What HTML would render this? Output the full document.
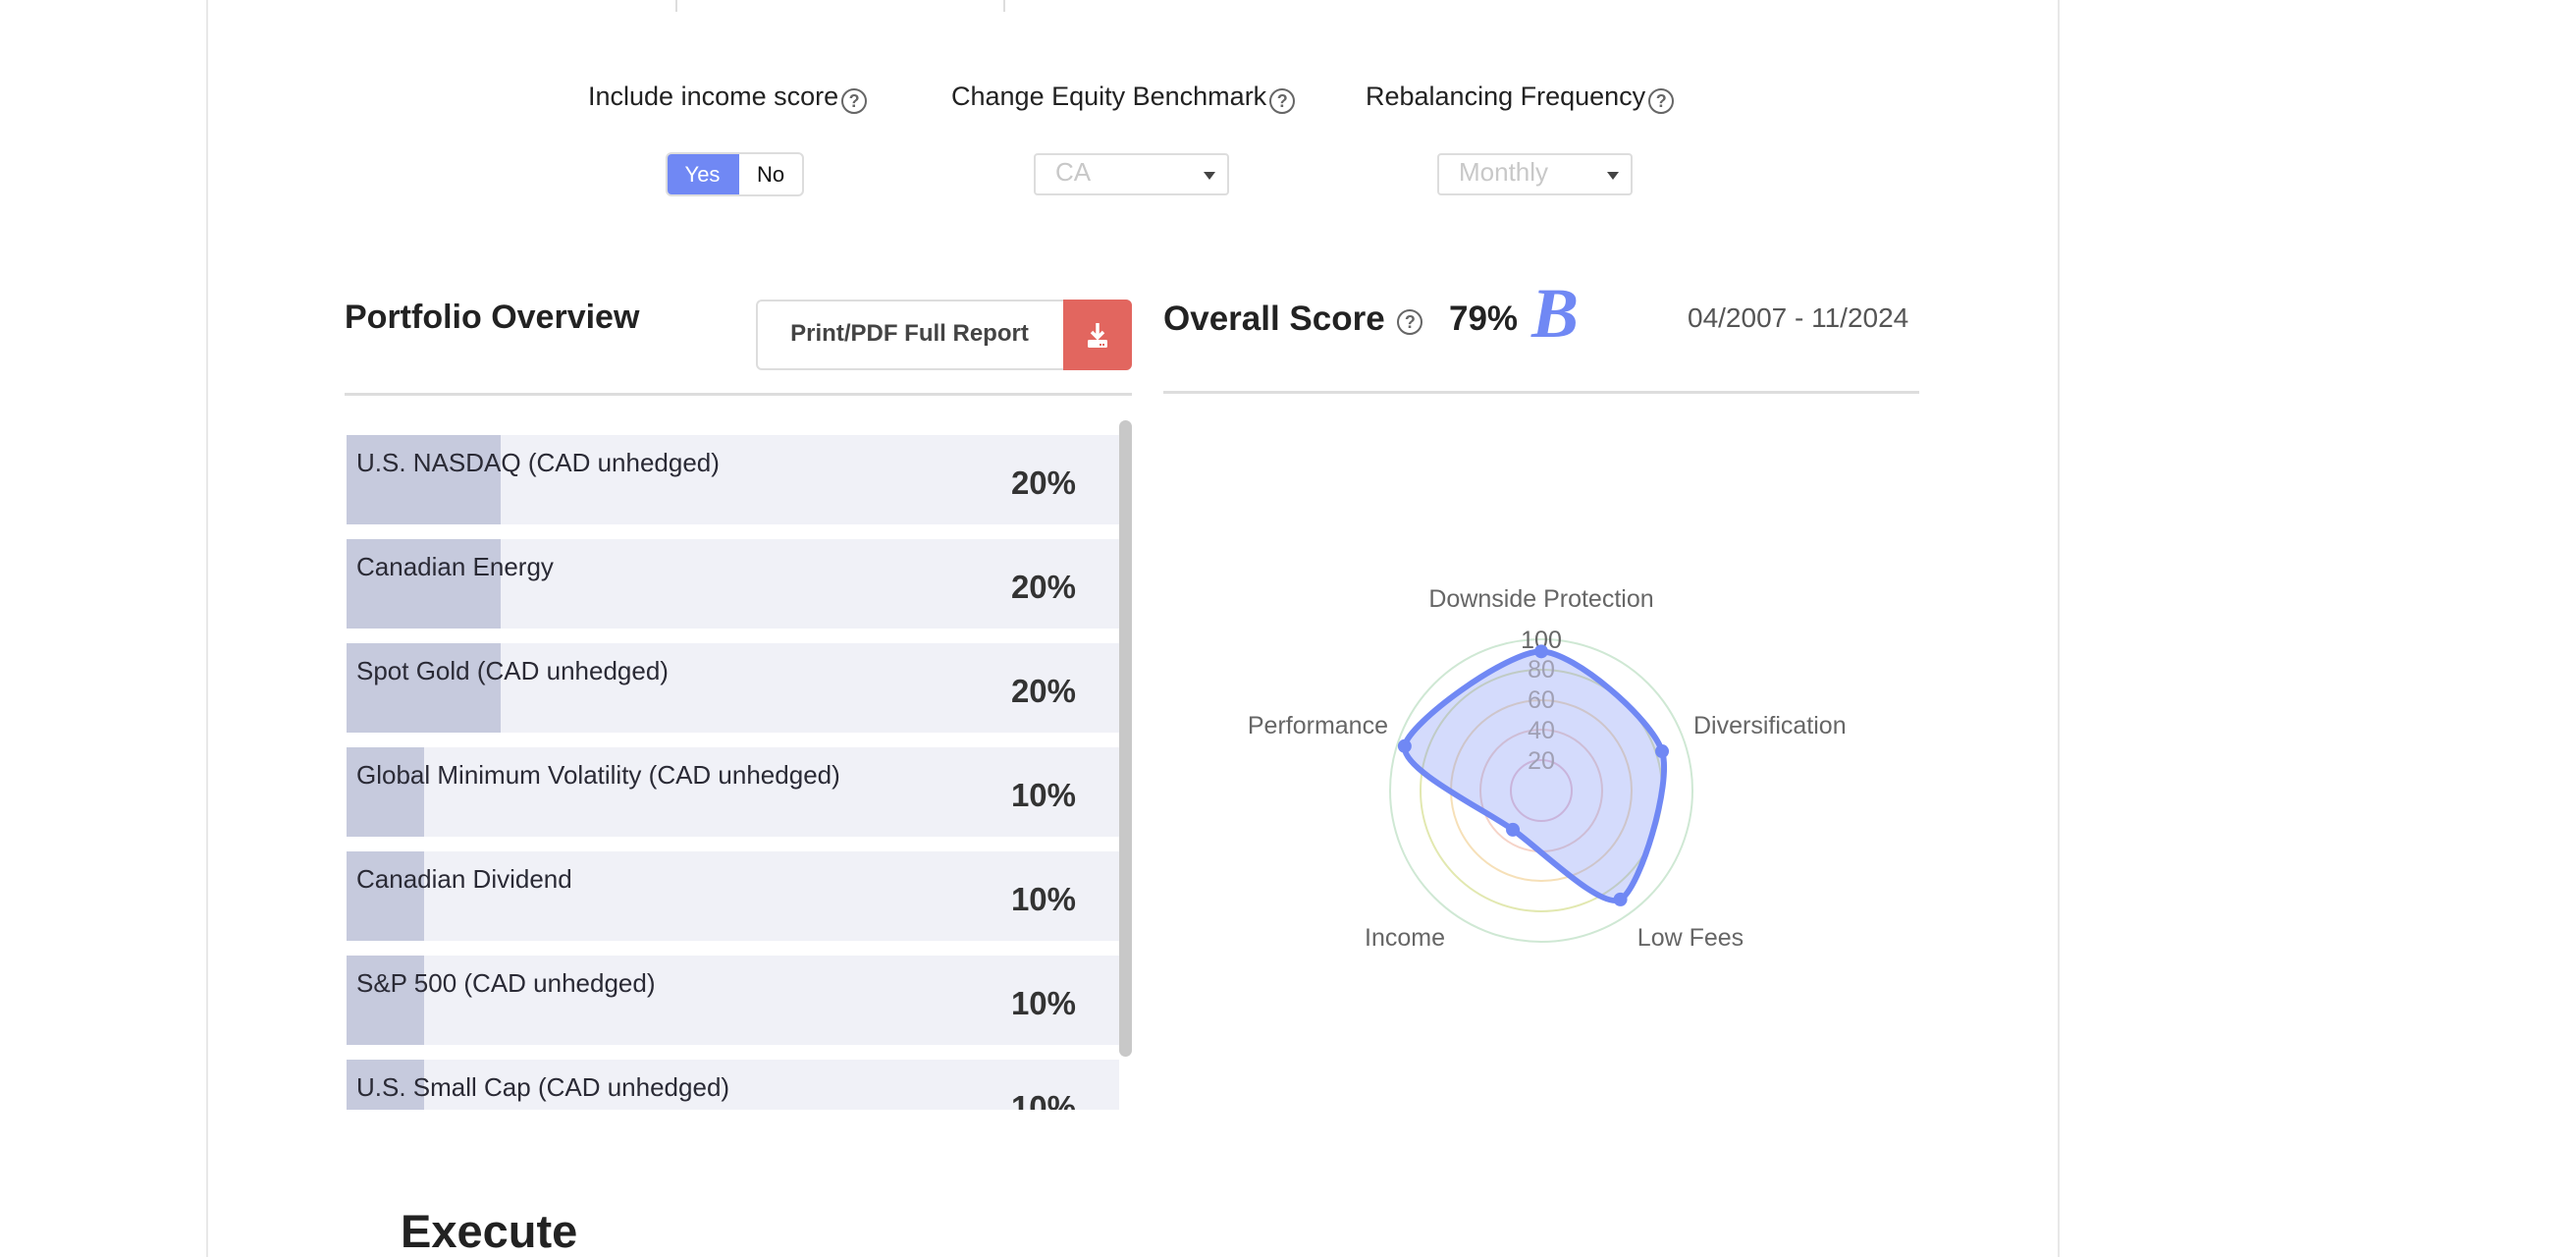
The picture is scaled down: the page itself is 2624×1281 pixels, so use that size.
<!DOCTYPE html>
<html><head><meta charset="utf-8"><style>
*{margin:0;padding:0;box-sizing:border-box}
body{width:2624px;height:1280px;position:relative;background:#fff;font-family:"Liberation Sans",sans-serif;color:#222;overflow:hidden}
.a{position:absolute}
.lbl{font-size:27px;color:#222;white-space:nowrap;top:83px}
.q{display:inline-block;width:26px;height:26px;border:2px solid #666;border-radius:50%;font-size:18px;line-height:22px;text-align:center;color:#666;font-weight:bold;vertical-align:-2px;margin-left:3px}
.row{position:absolute;left:353px;width:787px;height:91px;background:#f0f1f7}
.bar{position:absolute;left:0;top:0;height:91px;background:#c6cadd}
.row .t{position:absolute;left:10px;top:13px;font-size:26px;color:#2a2a35;white-space:nowrap}
.row .p{position:absolute;right:44px;top:30px;font-size:33px;font-weight:bold;color:#333}
.sel{position:absolute;top:156px;height:43px;border:2px solid #ddd;border-radius:4px;font-size:26px;color:#c8c8c8;padding:2px 0 0 20px}
.sel:after{content:"";position:absolute;right:12px;top:17px;border-left:6px solid transparent;border-right:6px solid transparent;border-top:8px solid #444}
</style></head><body>
<div class="a" style="left:210px;top:0;width:2px;height:1280px;background:#e8e8e8"></div>
<div class="a" style="left:2096px;top:0;width:2px;height:1280px;background:#e8e8e8"></div>
<div class="a" style="left:688px;top:0;width:2px;height:12px;background:#ddd"></div>
<div class="a" style="left:1022px;top:0;width:2px;height:12px;background:#ddd"></div>

<div class="a lbl" style="left:599px">Include income score<span class="q">?</span></div>
<div class="a lbl" style="left:969px">Change Equity Benchmark<span class="q">?</span></div>
<div class="a lbl" style="left:1391px">Rebalancing Frequency<span class="q">?</span></div>

<div class="a" style="left:678px;top:155px;width:141px;height:45px;border:2px solid #ddd;border-radius:6px;overflow:hidden;background:#fff">
<div class="a" style="left:-2px;top:-2px;width:75px;height:45px;background:#7088f4;color:#fff;font-size:22px;text-align:center;line-height:45px">Yes</div>
<div class="a" style="left:73px;top:0;width:64px;height:41px;color:#111;font-size:22px;text-align:center;line-height:41px">No</div>
</div>
<div class="sel" style="left:1053px;width:199px">CA</div>
<div class="sel" style="left:1464px;width:199px">Monthly</div>

<div class="a" style="left:351px;top:304px;font-size:34px;font-weight:bold;color:#222">Portfolio Overview</div>
<div class="a" style="left:770px;top:305px;width:383px;height:72px;border:2px solid #ddd;border-radius:6px;background:#fff"></div>
<div class="a" style="left:770px;top:326px;width:313px;text-align:center;font-size:24px;font-weight:bold;color:#444">Print/PDF Full Report</div>
<div class="a" style="left:1083px;top:305px;width:70px;height:72px;background:#e2665f;border-radius:0 6px 6px 0">
<svg width="70" height="72" viewBox="0 0 70 72"><path d="M35 24v14M29 33l6 6 6-6" stroke="#fff" stroke-width="3.5" fill="none"/><rect x="25" y="41" width="20" height="8" rx="1.5" fill="#fff"/><rect x="37" y="45" width="2" height="2" fill="#e2665f"/><rect x="40" y="45" width="2" height="2" fill="#e2665f"/></svg></div>
<div class="a" style="left:351px;top:400px;width:802px;height:3px;background:#ddd"></div>

<div class="a" style="left:1185px;top:305px;font-size:35px;font-weight:bold;color:#222">Overall Score <span class="q" style="vertical-align:2px">?</span></div>
<div class="a" style="left:1476px;top:305px;font-size:35px;font-weight:bold;color:#222">79%</div>
<div class="a" style="left:1560px;top:278px;font-size:72px;font-weight:bold;font-style:italic;color:#7088f4;font-family:'Liberation Serif',serif">B</div>
<div class="a" style="left:1719px;top:308px;font-size:28px;color:#555">04/2007 - 11/2024</div>
<div class="a" style="left:1185px;top:398px;width:770px;height:3px;background:#ddd"></div>

<div class="a" style="left:350px;top:428px;width:805px;height:702px;overflow:hidden">
<div style="position:relative;left:-350px;top:-428px">
<div class="row" style="top:443px"><div class="bar" style="width:157px"></div><div class="t">U.S. NASDAQ (CAD unhedged)</div><div class="p">20%</div></div>
<div class="row" style="top:549px"><div class="bar" style="width:157px"></div><div class="t">Canadian Energy</div><div class="p">20%</div></div>
<div class="row" style="top:655px"><div class="bar" style="width:157px"></div><div class="t">Spot Gold (CAD unhedged)</div><div class="p">20%</div></div>
<div class="row" style="top:761px"><div class="bar" style="width:79px"></div><div class="t">Global Minimum Volatility (CAD unhedged)</div><div class="p">10%</div></div>
<div class="row" style="top:867px"><div class="bar" style="width:79px"></div><div class="t">Canadian Dividend</div><div class="p">10%</div></div>
<div class="row" style="top:973px"><div class="bar" style="width:79px"></div><div class="t">S&amp;P 500 (CAD unhedged)</div><div class="p">10%</div></div>
<div class="row" style="top:1079px"><div class="bar" style="width:79px"></div><div class="t">U.S. Small Cap (CAD unhedged)</div><div class="p">10%</div></div>
</div></div>
<div class="a" style="left:1140px;top:428px;width:13px;height:648px;background:#c8c8c8;border-radius:7px"></div>

<div class="a" style="left:408px;top:1226px;font-size:47px;font-weight:bold;color:#222">Execute</div>

<svg class="a" style="left:0;top:0" width="2624" height="1280" id="r">
<g fill="none" stroke-width="2">
<circle cx="1570" cy="805" r="31" stroke="#f0c8d0"/>
<circle cx="1570" cy="805" r="62" stroke="#f6d4c8"/>
<circle cx="1570" cy="805" r="92" stroke="#f6e0b8"/>
<circle cx="1570" cy="805" r="123" stroke="#e2e8b0"/>
<circle cx="1570" cy="805" r="154" stroke="#cfe8d4"/>
</g>
<path id="sh" fill="rgba(112,136,244,0.3)" stroke="#7088f4" stroke-width="6"/>
<g font-family="Liberation Sans,sans-serif" font-size="25" fill="#a0a0b4" text-anchor="middle">
<text x="1570" y="783">20</text><text x="1570" y="752">40</text><text x="1570" y="721">60</text><text x="1570" y="690">80</text><text x="1570" y="660" fill="#666">100</text>
</g>
<g font-family="Liberation Sans,sans-serif" font-size="25" fill="#666">
<text x="1570" y="618" text-anchor="middle">Downside Protection</text>
<text x="1725" y="747">Diversification</text>
<text x="1414" y="747" text-anchor="end">Performance</text>
<text x="1431" y="963" text-anchor="middle">Income</text>
<text x="1722" y="963" text-anchor="middle">Low Fees</text>
</g>
<g id="dots" fill="#7088f4"></g>
</svg>
<script>
var v=[92,84,89,32,95],cx=1570,cy=805,R=154,p=[];
for(var i=0;i<5;i++){var a=(-90+72*i)*Math.PI/180,r=R*v[i]/100;p.push([cx+r*Math.cos(a),cy+r*Math.sin(a)]);}
var d="M"+p[0].join(","),t=0.13;
for(var i=0;i<5;i++){var p0=p[(i+4)%5],p1=p[i],p2=p[(i+1)%5],p3=p[(i+2)%5];
var c1=[p1[0]+(p2[0]-p0[0])*t,p1[1]+(p2[1]-p0[1])*t],c2=[p2[0]-(p3[0]-p1[0])*t,p2[1]-(p3[1]-p1[1])*t];
d+="C"+c1.join(",")+" "+c2.join(",")+" "+p2.join(",");}
document.getElementById("sh").setAttribute("d",d+"Z");
var g=document.getElementById("dots");
p.forEach(function(q){var c=document.createElementNS("http://www.w3.org/2000/svg","circle");c.setAttribute("cx",q[0]);c.setAttribute("cy",q[1]);c.setAttribute("r",7);g.appendChild(c);});
</script>
</body></html>
